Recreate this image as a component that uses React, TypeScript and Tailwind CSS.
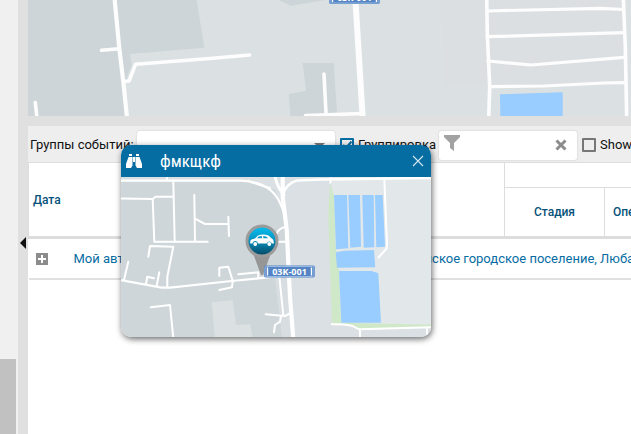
import { useState } from "react";

function RegionMap() {
  return (
    <svg
      className="block h-[116px] w-full bg-[#dbe1e3]"
      viewBox="0 0 603 116"
      preserveAspectRatio="xMinYMin slice"
      role="img"
      aria-label="Карта"
    >
      {/* Blocks */}
      <g fill="#cdd5d8">
        <path d="M0 0H86L99 116H0Z" />
        <path d="M86 0H168.7L176.3 47.7L102 54L103.7 65L98 80H95Z" />
        <path d="M250.3 0L263 5.7L297 0Z" />
        <path d="M274.7 63H305.7L309 112V116H262.3L260.7 94L278 90.7Z" />
      </g>
      <path d="M412 0H596V84L462 86.7H416Z" fill="#dcdfe1" />
      <path d="M472 94.3L534.7 92.3V116H472.3Z" fill="#99ccff" />

      {/* Roads */}
      <g fill="none" stroke="#fdfdfe" strokeWidth="3.6" strokeLinecap="round" strokeLinejoin="round">
        <path strokeWidth="4.2" d="M86.5 -2L91.3 48.3L95.3 81.7L99 118" />
        <path d="M73.5 50.3L91 48.7" />
        <path d="M96 81.3L101 81L107.5 64.3L182 58.5L221.5 55" />
        <path d="M7.3 102.5L9 118" />
        <path d="M296 74L298 113.5" />
        <path d="M277.5 115.5L335 113.5" />
        <path strokeWidth="6" d="M327.3 -2L334.7 118" />
        <path d="M458.7 -2L459.3 33L461.7 86.7L460.7 118" />
        <path d="M595.3 -2L597.3 46.7L598.7 118" />
        <path strokeWidth="3.2" d="M459 11L573 8.3L595.5 9.5M459 36.7L596 32.7M460 61L503 65L596 57.3M462 86.7L516 86L576 83L597 82.7" />
      </g>

      <RoadSign x={301} y={-8} />
    </svg>
  );
}

function RoadSign({ x, y }: { x: number; y: number }) {
  return (
    <g transform={`translate(${x} ${y})`}>
      <rect width="51" height="12" rx="2" fill="#5484c4" />
      <rect x="1" y="1" width="49" height="10" rx="1.5" fill="none" stroke="#a9c8ea" strokeWidth="0.8" />
      <path d="M3.5 2V10M47.5 2V10" stroke="#fff" strokeWidth="1.4" />
      <text x="25.5" y="9.4" textAnchor="middle" fill="#fff" className="font-['Open_Sans',sans-serif] text-[9px] font-bold">
        03K-001
      </text>
    </g>
  );
}

function VehicleMap() {
  return (
    <svg
      className="block w-full bg-[#cfd6d9]"
      viewBox="0 0 310 160"
      preserveAspectRatio="xMidYMid slice"
      role="img"
      aria-label="Положение автомобиля"
    >
      <defs>
        <linearGradient id="pin" x1="0" y1="0" x2="0" y2="1">
          <stop offset="0" stopColor="#08c2f4" />
          <stop offset="0.45" stopColor="#0795c2" />
          <stop offset="1" stopColor="#064560" />
        </linearGradient>
      </defs>

      {/* Land */}
      <path d="M162 0H310V160H172L166 53Z" fill="#dae0e3" />
      <path d="M127 3L154 13L162 30V0H0V3Z" fill="#dae0e3" />
      <path d="M153 94H168L172 160H161Z" fill="#d7dde0" />
      <path d="M210 0H310V148L220 146Z" fill="#e2e8ea" />
      <path d="M90.7 125.3L111.7 123.3L115 148L129 147.3L131.7 160H93.7Z" fill="#dbe1e3" />
      <path d="M209 6.3L213 18L214.7 71L218 93L220 145.7L310 147.7V150.5L239 152L231 148.5L211 147L207.3 36.3Z" fill="#cfe9c8" />

      {/* Ponds */}
      <g fill="#99ccff">
        <path d="M213 18H226L227.3 71.3L215 72.3Z" />
        <path d="M227.3 18H239L240 69.7L229.3 70.7Z" />
        <path d="M241.3 18H252.7L253.3 70.3L242.7 70.7Z" />
        <path d="M254 18H261.7L264 69.7L255.3 70.3Z" />
        <path d="M214.7 75.3L224 73.7L253 73L254.3 90.3L216 90.7Z" />
        <path d="M218 94H250.7L257.3 96.3L260 145.7H220.3Z" />
      </g>

      {/* Roads */}
      <g fill="none" stroke="#fff" strokeWidth="2" strokeLinejoin="round" strokeLinecap="round">
        <path strokeWidth="2.2" d="M-2 3.7H120Q150 5 159 26Q164 36 165 46" />
        <path d="M127 3.7Q140 9 149 11" />
        <path strokeWidth="3" d="M154 -1Q156 10 163 18" />
        <path strokeWidth="4.2" d="M161.7 -2V19.7L165.7 53L169 119.7L172.3 162" />
        <path strokeWidth="2.5" d="M162 17Q166 6 176 3.5L200 2.5L312 1" />
        <path d="M52.3 3.7L53.7 64.7M46 0V3" />
        <path d="M-1 21.5L31.7 22L34.5 19.7H52.3M31.7 22L33.3 64.7H86.7" />
        <path d="M73.3 18L74 64M74 41.7L84 47H107.7M107.3 39.7L108 59" />
        <path d="M27.3 79.7L29 69L52.3 69.7L46.3 99.7V109.7" />
        <path strokeWidth="2.2" d="M-1 103L40.7 110.7H49L110.7 104L144 100.7L168 98" />
        <path d="M7.3 84.7L3 103M25 107L26.3 99.7L33 101.3M38.3 95.3L35.7 109" />
        <path d="M98.3 99V90.7L107.3 89.7L111.7 103.7L111 110.3L98.3 113" />
        <path d="M117.3 97.3L137.3 95.3V100.7" />
        <path d="M29.7 130.3L49 128L52.3 161" />
        <path d="M144.7 137.3L164 139L169.7 136M153 155.3L154 148L159 144.7L160 139M158.3 99.7L162.3 138" />
        <path d="M165 49.7Q158 51 156 56M155.7 64.7H165.7" />
        <path d="M210 1.3L209.3 5.7" />
        <path d="M263.3 1.3L266 66.3L265.7 71.3L257.5 80.5" />
        <path d="M210.7 147.3Q222 147 230.7 148.7L238.3 152.3L311 150.3M239 153V161M306 151V161" />
      </g>

      {/* Car marker */}
      <path d="M132 76H150L142 98H140Z" fill="#969696" />
      <circle cx="141" cy="64" r="15" fill="url(#pin)" stroke="#9b9b9b" strokeWidth="3" />
      <path
        d="M129.2 66.5Q128.8 63.2 130.5 62.4L134 61.5L137 58.5Q142.5 56.3 147.5 58.5L150.5 61.3Q153.2 62.5 152.8 66.5H150.8A2.6 2.6 0 0 0 145.8 66.5H136.8A2.6 2.6 0 0 0 131.6 66.5Z"
        fill="#fff"
      />
      <path d="M135.8 61.3L138.2 59.3H141V61.3ZM142.3 59.1Q145 59 147.3 61.3H142.3Z" fill="#0898c6" />
      <circle cx="134.2" cy="67" r="1.9" fill="#fff" />
      <circle cx="148.3" cy="67" r="1.9" fill="#fff" />
      <RoadSign x={143} y={88.5} />
    </svg>
  );
}

function VehiclePopup() {
  return (
    <section className="absolute left-[121px] top-[145px] z-10 w-[310px] overflow-hidden rounded-[10px] shadow-[1px_2px_6px_rgba(0,0,0,0.6)]">
      <header className="flex h-8 items-center bg-[#066da3] pl-[5px] pr-[7px] text-white">
        <svg className="size-4" viewBox="0 0 16 16" fill="#fff">
          <path d="M3 1H6V3H3ZM10 1H13V3H10Z" />
          <path d="M2.5 4H6.5V12.5L5 15H0V11ZM13.5 4H9.5V12.5L11 15H16V11Z" />
          <path d="M7 4H9V9H7Z" />
        </svg>
        <h2 className="ml-[18px] grow font-['Roboto_Condensed','Liberation_Sans_Narrow',Roboto,sans-serif] text-[17px] leading-8">
          фмкщкф
        </h2>
        <button type="button" aria-label="Закрыть">
          <svg className="block size-3" viewBox="0 0 12 12" stroke="#d5e8f2" strokeWidth="1.1">
            <path d="M1 1L11 11M11 1L1 11" />
          </svg>
        </button>
      </header>
      <VehicleMap />
    </section>
  );
}

function Toolbar() {
  const [grouped, setGrouped] = useState(true);
  const [showAll, setShowAll] = useState(false);
  const [filter, setFilter] = useState("");

  return (
    <div className="flex h-9 items-center overflow-hidden whitespace-nowrap bg-[#eeeeee] pl-0.5 pt-0.5 text-[#111]">
      <label htmlFor="groups" className="w-[107px] shrink-0">Группы событий:</label>
      <div className="relative w-[198px] shrink-0">
        <select
          id="groups"
          className="block h-[29px] w-full appearance-none rounded-[3px] bg-white px-2 shadow-[0_0_1px_1px_#e2e2e2]"
        >
          <option value=""></option>
        </select>
        <svg className="pointer-events-none absolute right-[10px] top-3 h-[5px] w-[11px]" viewBox="0 0 11 5" fill="#777">
          <path d="M0 0H11L5.5 5Z" />
        </svg>
      </div>

      <label className="ml-[5px] flex shrink-0 items-center gap-1">
        <CheckBox checked={grouped} onChange={setGrouped} />
        Группировка
      </label>

      <div className="relative ml-[3px] w-[138px] shrink-0">
        <input
          type="text"
          aria-label="Фильтр"
          value={filter}
          onChange={(e) => setFilter(e.target.value)}
          className="block h-[29px] w-full rounded-[3px] bg-white px-7 shadow-[0_0_1px_1px_#e2e2e2]"
        />
        <svg className="pointer-events-none absolute left-[5px] top-1 size-4" viewBox="0 0 16 16" fill="#a2a2a2">
          <path d="M0 0H16V2L10 8V16L6 13V8L0 2Z" />
        </svg>
        <button
          type="button"
          aria-label="Очистить"
          onClick={() => setFilter("")}
          className="absolute right-[10px] top-2"
        >
          <svg className="block size-3" viewBox="0 0 12 12" stroke="#8c8c8c" strokeWidth="3">
            <path d="M1.5 1.5L10.5 10.5M10.5 1.5L1.5 10.5" />
          </svg>
        </button>
      </div>

      <label className="ml-[5px] flex shrink-0 items-center gap-1">
        <CheckBox checked={showAll} onChange={setShowAll} />
        Show all
      </label>
    </div>
  );
}

function CheckBox({ checked, onChange }: { checked: boolean; onChange: (value: boolean) => void }) {
  return (
    <span className="relative block size-[14px]">
      <input
        type="checkbox"
        checked={checked}
        onChange={(e) => onChange(e.target.checked)}
        className="block size-[14px] appearance-none rounded-[1px] border-2 border-[#777] checked:border-[#066da3]"
      />
      {checked && (
        <svg className="pointer-events-none absolute inset-0 size-[14px]" viewBox="0 0 14 14" fill="none" stroke="#066da3" strokeWidth="2">
          <path d="M3 7L6 10L11.5 3.5" />
        </svg>
      )}
    </span>
  );
}

function EventsTable() {
  return (
    <table className="w-[760px] table-fixed border-collapse text-left">
      <colgroup>
        <col className="w-[476px]" />
        <col className="w-[100px]" />
        <col />
      </colgroup>
      <thead className="text-xs text-[#07527a]">
        <tr className="h-[25px] border-t border-[#dddddd]">
          <th rowSpan={2} className="border-l border-r border-[#dddddd] pl-1 font-medium">Дата</th>
          <th colSpan={2}></th>
        </tr>
        <tr className="h-[50px] border-t border-b-[3px] border-[#dddddd]">
          <th className="border-r border-[#dddddd] text-center font-medium">Стадия</th>
          <th className="pl-2 font-medium">Операция</th>
        </tr>
      </thead>
      <tbody>
        <tr className="h-[41px] border-b-2 border-[#e0e0e0]">
          <td colSpan={3} className="pt-px">
            <div className="flex items-center whitespace-nowrap pl-[7px] text-[#066da3]">
              <button type="button" aria-label="Развернуть" className="mr-[26px] bg-[#8c8c8c]">
                <svg className="block size-3" viewBox="0 0 12 12" stroke="#fff" strokeWidth="2">
                  <path d="M6 2V10M2 6H10" />
                </svg>
              </button>
              <span className="w-[317px]">Мой автомобиль</span>
              <a href="#place">Любанское городское поселение, Любань</a>
            </div>
          </td>
        </tr>
      </tbody>
    </table>
  );
}

export default function App() {
  return (
    <div className="relative flex min-h-screen overflow-hidden bg-white font-[Roboto,sans-serif] text-[13px]">
      {/* Scroll track of the side panel */}
      <aside className="flex w-[18px] shrink-0 flex-col bg-[#f0f0f0]">
        <div className="h-[359px]" />
        <div className="w-4 grow bg-[#c1c1c1]" />
      </aside>

      <div className="flex w-[10px] shrink-0 flex-col bg-[#e0e0e0]">
        <button type="button" aria-label="Свернуть панель" className="mt-[237px] self-end pr-0.5">
          <svg className="block h-3 w-[6px]" viewBox="0 0 6 12" fill="#111">
            <path d="M6 0V12L0 6Z" />
          </svg>
        </button>
      </div>

      <main className="min-w-0 flex-1 overflow-hidden">
        <RegionMap />
        <div className="h-[10px] bg-[#e0e0e0]" />
        <Toolbar />
        <EventsTable />
      </main>

      <VehiclePopup />
    </div>
  );
}
